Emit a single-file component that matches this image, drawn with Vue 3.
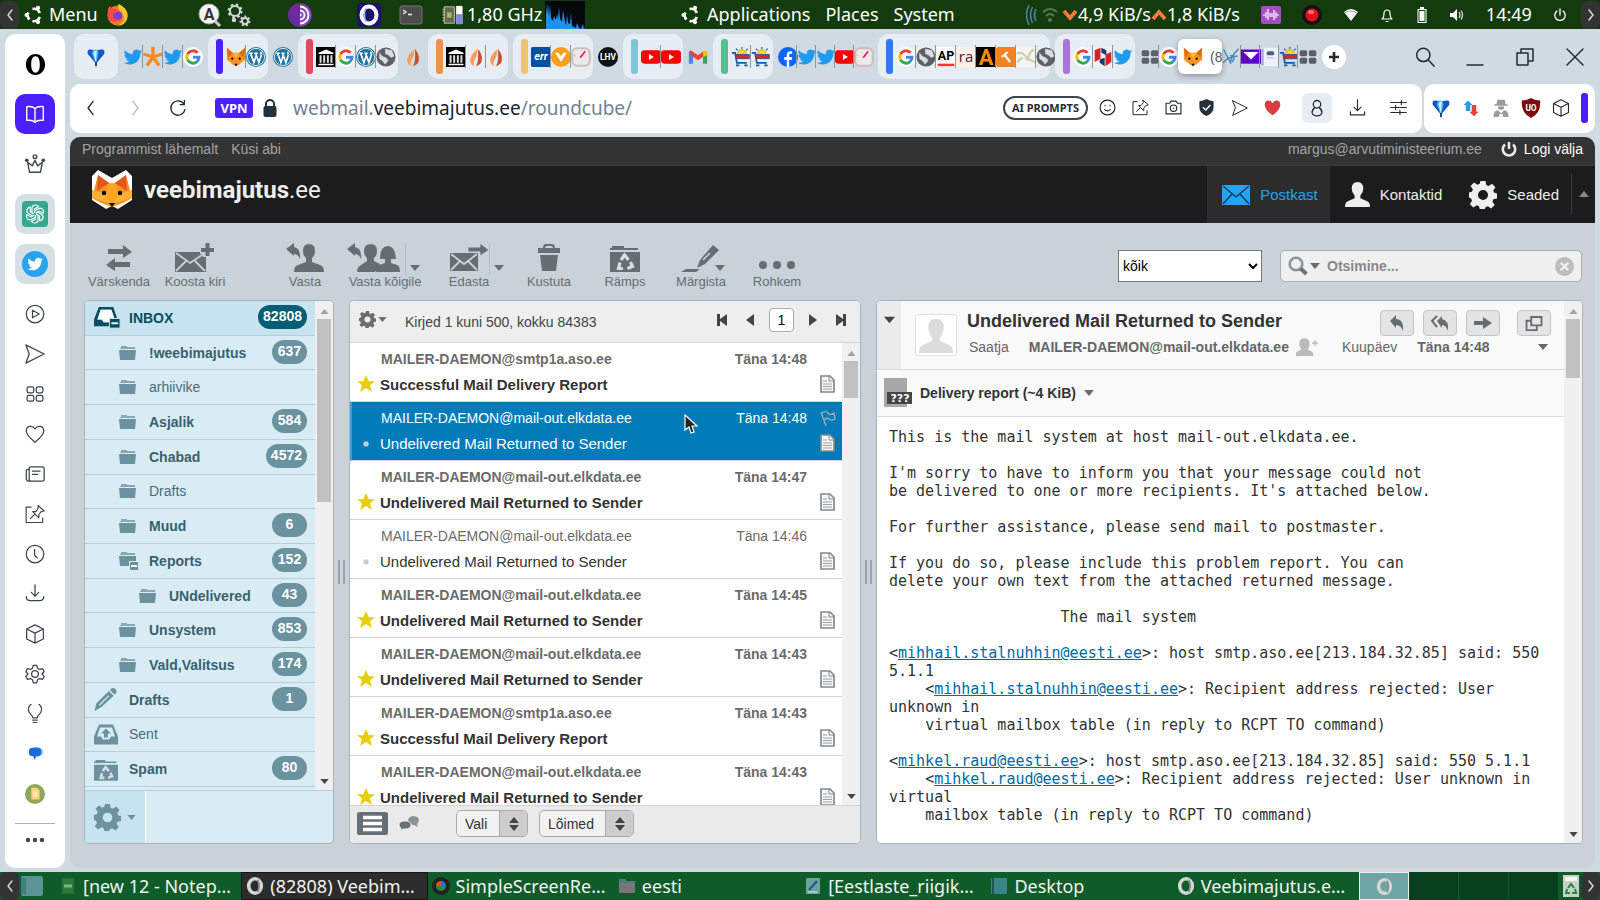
<script setup>
import { h, ref } from 'vue'

const line = (body, w = 1.5) => `<g fill="none" stroke="currentColor" stroke-width="${w}" stroke-linejoin="round" stroke-linecap="round">${body}</g>`

// name: [viewBox, markup]
const glyphs = {
  ubuntu: ['0 0 20 20', '<g fill="none" stroke="#fff" stroke-width="2.600"><path d="M4.300 7.500A6.300 6.300 0 0 0 5.500 14.500"/><path d="M8.500 16.100A6.300 6.300 0 0 0 15.800 12"/><path d="M15.800 8A6.300 6.300 0 0 0 8.500 3.900"/></g><g fill="#fff"><circle cx="2.600" cy="10" r="2.100"/><circle cx="14" cy="2.900" r="2.100"/><circle cx="14" cy="17.100" r="2.100"/></g>'],
  firefox: ['0 0 24 24', '<circle cx="12" cy="13" r="10.500" fill="#ff7a1c"/><path d="M13 1c5 2 10 7 9.500 13S17 24 12 23.500c7-1 9-8 4-14-2-2-4-4-3-8.500z" fill="#ffc52d"/><circle cx="12" cy="13.500" r="5" fill="#7a3fd0"/><path d="M2 8c0-2 1-4 2-5 1 2 2 2 4 3 2 0 5 1 5 3-3 0-4 2-6 3 0 4 4 6 7 5-3 5-12 3-12-4z" fill="#ff4a4a"/>'],
  searcha: ['0 0 24 24', '<path d="M16 17l6 6" stroke="#ccc" stroke-width="3"/><circle cx="11" cy="11" r="10" fill="#f4f4f4" stroke="#aaa"/><text x="11" y="17" font-size="16" font-weight="700" text-anchor="middle" fill="#333" font-family="Roboto">A</text>'],
  gears: ['0 0 24 24', '<g fill="none" stroke="#d6d6d6" stroke-width="2"><circle cx="8" cy="8" r="5"/><circle cx="8" cy="8" r="6.500" stroke-dasharray="2.500 2.600"/><circle cx="18" cy="18" r="3"/><circle cx="18" cy="18" r="4.500" stroke-dasharray="2 2"/><circle cx="7" cy="17" r="1.200"/></g>'],
  tor: ['0 0 24 24', '<circle cx="12" cy="12" r="12" fill="#6d2a9c"/><path d="M12 1a11 11 0 0 1 0 22z" fill="#8a4dba"/><g fill="none" stroke="#fff" stroke-width="1.800"><path d="M12 3.500a8.500 8.500 0 0 1 0 17M12 7.500a4.500 4.500 0 0 1 0 9"/></g><path d="M12 10.500a1.500 1.500 0 0 1 0 3z" fill="#fff"/>'],
  operagx: ['0 0 24 24', '<rect width="24" height="24" rx="4" fill="#1c1366"/><ellipse cx="12" cy="12" rx="7.500" ry="8.500" fill="none" stroke="#fff" stroke-width="4"/><path d="M9 5q-3 7 0 14" stroke="#9fb0ff" stroke-width="1.500" fill="none"/>'],
  terminal: ['0 0 24 20', '<rect x="1" y="1" width="22" height="18" rx="2" fill="#4c4c4c" stroke="#777"/><path d="M4 5l3 2-3 2M9 9.500h4" stroke="#eee" fill="none" stroke-width="1.300"/>'],
  cpu: ['0 0 24 22', '<path d="M1 5h14M1 8h14M1 11h14M1 14h14M1 17h14" stroke="#a9a98a" stroke-width="1.500"/><rect x="3" y="2" width="11" height="18" fill="#63694a" stroke="#c8c8a0"/><rect x="6" y="8" width="5" height="6" fill="#a5b878"/><rect x="16" y="1" width="7" height="20" fill="#fff"/><rect x="16" y="10" width="7" height="11" fill="#8488d8"/>'],
  graph: ['0 0 40 28', '<rect width="40" height="28" fill="#05080c"/><path d="M1 28V4l1 9 1-11 1 14 1-12 1 13 2 3 1-5 2 4 1-6 1 5 1-12 1 12 2 3 1-12 2 12 1 3 1-11 1 9 2 1 1-11 1 13 2 1 2 1 1-5 2 5 2 1 2-5 1 6 1-3v5z" fill="#1994f2"/>'],
  waves: ['0 0 12 24', '<path d="M10 6q-3 6 0 12M6.500 4q-4 8 0 16M3 2q-5 10 0 20" fill="none" stroke="#4c7fa8" stroke-width="1.600"/>'],
  dimwifi: ['0 0 16 16', '<g fill="none" stroke="#5f735c" stroke-width="2"><path d="M1 5q7-6 14 0M4 9q4-4 8 0"/></g><circle cx="8" cy="13" r="2" fill="#5f735c"/>'],
  down: ['0 0 16 14', '<path d="M2 3l6 7 6-7" fill="none" stroke="#ff7b3e" stroke-width="3.500"/>'],
  up: ['0 0 16 14', '<path d="M2 11l6-7 6 7" fill="none" stroke="#ff7b3e" stroke-width="3.500"/>'],
  audio: ['0 0 20 18', '<rect width="20" height="18" rx="2" fill="#a94cc4"/><path d="M3 8v2M5 6v6M7 3v11M9 7v4M11 7v4M13 4v10M15 6v6M17 8v2" stroke="#fff" stroke-width="1.200"/>'],
  record: ['0 0 20 20', '<circle cx="10" cy="10" r="10" fill="#1f0d0d"/><circle cx="10" cy="10" r="6.500" fill="#e01420"/><ellipse cx="9" cy="7" rx="3" ry="2" fill="#ff7070"/>'],
  wifi: ['0 0 16 14', '<path d="M1 4q7-6 14 0L8 13z" fill="#fff"/><path d="M2 5q6-4 12 0" stroke="#8aa58a" fill="none"/>'],
  bell: ['0 0 14 16', line('<path d="M2 12q2-1 2-6a3 3 0 0 1 6 0q0 5 2 6z"/><path d="M6 14.500h2"/>', 1.2)],
  battery: ['0 0 12 16', '<path d="M4 0h4v2h2.500v14h-9V2H4z" fill="#fff"/><path d="M3 3.500h6v11H3z" fill="none" stroke="#123c0b"/>'],
  sound: ['0 0 16 14', '<path d="M1 5h3l4-4v12L4 9H1z" fill="#fff"/><path d="M10 4q2 3 0 6M12 2.500q3 4.500 0 9" fill="none" stroke="#cfd8cf" stroke-width="1.300"/>'],
  power: ['0 0 14 14', line('<path d="M4 3a5.200 5.200 0 1 0 6 0M7 1v6"/>', 1.3)],
  chevL: ['0 0 8 12', line('<path d="M6 1L2 6l4 5"/>', 1.4)],
  chevR: ['0 0 8 12', line('<path d="M2 1l4 5-4 5"/>', 1.4)],

  opera: ['0 0 24 24', '<path fill-rule="evenodd" d="M12 1c5.500 0 10 4.500 10 11s-4.500 11-10 11S2 18.500 2 12 6.500 1 12 1zm0 2.500C9 3.500 7.500 7 7.500 12s1.500 8.500 4.500 8.500 4.500-3.500 4.500-8.500S15 3.500 12 3.500z" fill="currentColor"/>'],
  book: ['0 0 24 24', line('<path d="M12 6q-3-3-9-2v15q6-1 9 2 3-3 9-2V4q-6-1-9 2zM12 6v15"/>')],
  crown: ['0 0 24 24', line('<path d="M4 10l2 11h12l2-11-5 4-3-6-3 6z"/><circle cx="12" cy="4" r="2"/>') + '<circle cx="3" cy="8" r="2" fill="currentColor"/><circle cx="21" cy="8" r="2" fill="currentColor"/>'],
  gpt: ['0 0 26 26', '<rect width="26" height="26" rx="4" fill="#34a88c"/><g fill="none" stroke="#fff" stroke-width="1.200"><path d="M10 12V7.500q0-3.500 3.500-3.500 2 0 3 1.500l-4 2.500v4"/><path d="M10 12V7.500q0-3.500 3.500-3.500 2 0 3 1.500l-4 2.500v4" transform="rotate(60 13 13)"/><path d="M10 12V7.500q0-3.500 3.500-3.500 2 0 3 1.500l-4 2.500v4" transform="rotate(120 13 13)"/><path d="M10 12V7.500q0-3.500 3.500-3.500 2 0 3 1.500l-4 2.500v4" transform="rotate(180 13 13)"/><path d="M10 12V7.500q0-3.500 3.500-3.500 2 0 3 1.500l-4 2.500v4" transform="rotate(240 13 13)"/><path d="M10 12V7.500q0-3.500 3.500-3.500 2 0 3 1.500l-4 2.500v4" transform="rotate(300 13 13)"/></g>'],
  twcircle: ['0 0 48 48', '<circle cx="24" cy="24" r="24" fill="#2aa3ef"/><path transform="translate(10 10) scale(1.180)" d="M23.950 4.570a10 10 0 0 1-2.820.77 4.960 4.960 0 0 0 2.160-2.720 9.900 9.900 0 0 1-3.120 1.190 4.920 4.920 0 0 0-8.380 4.480A13.930 13.930 0 0 1 1.640 3.160a4.920 4.920 0 0 0 1.520 6.570 4.900 4.900 0 0 1-2.230-.61v.06a4.920 4.920 0 0 0 3.950 4.830 5 5 0 0 1-2.210.08 4.940 4.940 0 0 0 4.600 3.420A9.870 9.870 0 0 1 0 19.540a14 14 0 0 0 7.550 2.210c9.050 0 14-7.500 14-13.980 0-.21 0-.42-.02-.63a9.940 9.940 0 0 0 2.460-2.550z" fill="#fff"/>'],
  twitter: ['-1 -1 26 26', '<path d="M23.950 4.570a10 10 0 0 1-2.820.77 4.960 4.960 0 0 0 2.160-2.720 9.900 9.900 0 0 1-3.120 1.190 4.920 4.920 0 0 0-8.380 4.480A13.930 13.930 0 0 1 1.640 3.160a4.920 4.920 0 0 0 1.520 6.570 4.900 4.900 0 0 1-2.230-.61v.06a4.920 4.920 0 0 0 3.950 4.830 5 5 0 0 1-2.210.08 4.940 4.940 0 0 0 4.600 3.420A9.870 9.870 0 0 1 0 19.540a14 14 0 0 0 7.550 2.210c9.050 0 14-7.500 14-13.980 0-.21 0-.42-.02-.63a9.940 9.940 0 0 0 2.460-2.550z" fill="#1d9bf0"/>'],
  play: ['0 0 24 24', line('<circle cx="12" cy="12" r="10.500"/><path d="M9 7.500l8 4.500-8 4.500z"/>')],
  send: ['0 0 24 24', line('<path d="M1 1l22 11L1 23l4-11z"/>')],
  speed: ['0 0 24 24', line('<rect x="2.500" y="3.500" width="8" height="7" rx="2"/><rect x="13.500" y="3.500" width="8" height="7" rx="2"/><rect x="2.500" y="13.500" width="8" height="7" rx="2"/><rect x="13.500" y="13.500" width="8" height="7" rx="2"/>')],
  heart: ['0 0 24 24', line('<path d="M12 22C6 17 1.500 13 1.500 8.500 1.500 2 9 1 12 6c3-5 10.500-4 10.500 2.500C22.500 13 18 17 12 22z"/>')],
  news: ['0 0 24 24', line('<rect x="5" y="3.500" width="18" height="17" rx="2"/><path d="M5 6.500H3.500q-2 0-2 2v9q0 3 3 3H6M9 8.500h9M9 12.500h6"/>')],
  pin: ['0 0 26 24', line('<path d="M8 3H1.500v20H23v-6M7 18l5-5M17 1l8 7-4 1-3 4v4l-8-8h4l3-4z"/>')],
  clock: ['0 0 24 24', line('<circle cx="12" cy="12" r="10.500"/><path d="M11.500 6.500v7l3 3"/>')],
  download: ['0 0 24 24', line('<path d="M12 1v13M7.500 10l4.500 4.500 4.500-4.500M1.500 15q0 5 5 5h11q5 0 5-5"/>')],
  cube: ['0 0 24 24', line('<path d="M12 1l10 5v12l-10 5-10-5V6zM2 6l10 5 10-5M12 11v12"/>')],
  gearline: ['0 0 24 24', line('<circle cx="12" cy="12" r="4"/><path d="M10 1.500h4l1 3.500 2.500 1.500 3.500-1 2 3.500-2.500 3 2.500 3-2 3.500-3.500-1L15 19l-1 3.500h-4L9 19l-2.500-1.500-3.500 1L1 15l2.500-3L1 9l2-3.500 3.500 1L9 5z"/>')],
  bulb: ['0 0 24 26', line('<path d="M9 18q0-3-3-5a8.500 8.500 0 1 1 12 0q-3 2-3 5zM9 21h6M9.500 24h5"/>')],
  chat: ['0 0 16 16', '<ellipse cx="9" cy="6" rx="7" ry="5" fill="#7db0ff"/><path d="M2 5q0-3 3-3h6q3 0 3 3v1q0 4-3 4H9l-1 4-2-4H5q-3 0-3-3z" fill="#1a6ae0"/>'],
  file: ['0 0 22 22', '<circle cx="11" cy="11" r="11" fill="#8ea75a"/><path d="M7 4h6l3 3v10H7z" fill="#ffd47a"/><path d="M9 9h4M9 11h5M9 13h5" stroke="#fff"/>'],
  more: ['0 0 20 6', '<g fill="#3b464f"><circle cx="3" cy="3" r="2.200"/><circle cx="10" cy="3" r="2.200"/><circle cx="17" cy="3" r="2.200"/></g>'],

  balloon: ['0 0 24 24', '<path d="M12 20L2 8Q1 2 6 3q6 2 12 0 5-1 4 5z" fill="#1457c8"/><path d="M12 20L7 8q0-5 5-5 3 1 3 5z" fill="#3fb2ff"/><path d="M12 19q-2-7-3-11 1-4 4-4z" fill="#cfefff"/><path d="M11 18h2v5h-2z" fill="#0c2a5c"/>'],
  star6: ['0 0 20 20', '<g stroke="#f68b1f" stroke-width="3.400"><path d="M10 10V0M10 10L.5 7M10 10l9.500-3M10 10L4 18.500M10 10l6 8.500"/></g>'],
  google: ['0 0 24 24', '<circle cx="12" cy="12" r="12" fill="#fff"/><g fill="none" stroke-width="3.600"><path d="M17.500 7A7.400 7.400 0 0 0 5.500 8.500" stroke="#ea4335"/><path d="M5.500 8.500a7.400 7.400 0 0 0 0 7" stroke="#fbbc05"/><path d="M5.500 15.500A7.400 7.400 0 0 0 17 17.500" stroke="#34a853"/><path d="M12 12.200h7.200q0 3.500-2.400 5.300" stroke="#4285f4"/></g>'],
  fox: ['0 0 24 24', '<path d="M1 1l7 6h8l7-6v14l-7 6-4 2-4-2-7-6z" fill="#f7931e"/><path d="M1 1l7 6-5 6zM23 1l-7 6 5 6z" fill="#e2661a"/><path d="M8 7h8l-4 7z" fill="#ffb43c"/><circle cx="7.500" cy="14" r="1.300"/><circle cx="16.500" cy="14" r="1.300"/><path d="M10 20h4l-2 3z"/>'],
  wp: ['0 0 24 24', '<circle cx="12" cy="12" r="12" fill="#21759b"/><circle cx="12" cy="12" r="10.300" fill="none" stroke="#fff"/><path d="M4 7.500h4M10 7.500h4M5.500 7.500l4 11 2.800-8M11.500 7.500l4 11 3-9q0-2-1-3.500" fill="none" stroke="#fff" stroke-width="2"/>'],
  museum: ['0 0 24 24', '<rect width="24" height="24" fill="#000"/><path d="M3 7l9-4 9 4v1.500H3zM3 20h18v2H3z" fill="#fff"/><path d="M5.500 10v9M9.800 10v9M14.200 10v9M18.500 10v9" stroke="#ddd" stroke-width="2.400"/>'],
  globe: ['0 0 24 24', '<circle cx="12" cy="12" r="11.500" fill="#5f6163"/><path d="M4 6q3 6 7 6l4 4-4 5-3-4-4-3zM11 2l8 2 3 7-4 2-3-3-4-2z" fill="#d8dee3"/>'],
  flame: ['0 0 24 24', '<path d="M14 2q6 7 5 13 0 6-7 8 4-7 2-21z" fill="#c9502c"/><path d="M13 3q-8 7-8 13 0 5 5 7-2-5 1-9 3-4 2-11z" fill="#ff9c66"/>'],
  err: ['0 0 24 24', '<rect width="24" height="24" rx="2" fill="#0450a4"/><text x="12" y="16" text-anchor="middle" font-size="13" font-weight="700" font-style="italic" fill="#fff" font-family="Roboto">err</text>'],
  vcircle: ['0 0 24 24', '<circle cx="12" cy="12" r="12" fill="#f9a01b"/><path d="M5 7l7 11 7-11h-4l-3 4-3-4z" fill="#fff"/>'],
  dial: ['0 0 24 24', '<rect x="1.500" y="1.500" width="21" height="21" rx="6" fill="#eceae9" stroke="#cbbfbb" stroke-width="2.500"/><path d="M11 13l6-8" stroke="#ec1381" stroke-width="2"/><path d="M3 9l3 2" stroke="#bbb"/>'],
  lhv: ['0 0 24 24', '<circle cx="12" cy="12" r="12" fill="#111"/><text x="12" y="16" text-anchor="middle" font-size="10" font-weight="700" fill="#fff" font-family="Roboto">LHV</text>'],
  youtube: ['0 0 24 24', '<rect y="4" width="24" height="16" rx="4" fill="#f00"/><path d="M9.500 8.500l6 3.500-6 3.500z" fill="#fff"/>'],
  gmail: ['0 0 24 24', '<path d="M1 6v14h5V10z" fill="#4285f4"/><path d="M23 6v14h-5V10z" fill="#34a853"/><path d="M1 6q1-3 4-1l7 5 7-5v6l-7 5-7-5z" fill="#ea4335"/><path d="M18 6q4-4 5 0v4l-5 2z" fill="#fbbc05"/>'],
  cart: ['0 0 24 24', '<circle cx="13" cy="8" r="5" fill="#ffd52b" stroke="#e39b00"/><path d="M6 2l2 2M13 0v2M20 2l-2 2" stroke="#1f60a8" stroke-width="1.500"/><path d="M1 7h4l2 12h12M6 22h4M16 22h4" fill="none" stroke="#1b579c" stroke-width="2"/><path d="M5 9h17v5H6z" fill="#e02125" stroke="#1b579c"/>'],
  facebook: ['0 0 24 24', '<circle cx="12" cy="12" r="12" fill="#0866ff"/><path d="M10.500 24v-8.500H7.500V12h3V9.500Q10.500 5 15 5h2v3h-2q-1.500 0-1.500 2v2H17l-.6 3.500h-3V24z" fill="#fff"/>'],
  ap: ['0 0 24 24', '<rect width="24" height="24" fill="#fff"/><text x="12" y="16" text-anchor="middle" font-size="15" font-weight="700" font-family="Roboto">AP</text><path d="M2 21.500h20" stroke="#ff322e" stroke-width="3"/>'],
  ra: ['0 0 24 24', '<rect width="24" height="24" fill="#fdeee6"/><text x="12" y="18" text-anchor="middle" font-size="18" fill="#4a1f2c" font-family="Open Sans">ra</text>'],
  biga: ['0 0 24 24', '<rect width="24" height="24" fill="#000"/><text x="12" y="21" text-anchor="middle" font-size="26" font-weight="700" fill="#ff8a00" font-family="Roboto">A</text>'],
  hammer: ['0 0 24 24', '<rect width="24" height="24" rx="3" fill="#f58220"/><path d="M7 12l7-6M10 9l7 9" stroke="#fff" stroke-width="2.600"/>'],
  plant: ['0 0 24 24', '<rect width="24" height="24" fill="#f4f5f2"/><path d="M1 8q8-4 13 8M22 3q-7 3-8 13M8 13q-5 2-6 6M14 15q5 0 9 4" fill="none" stroke="#cfccae" stroke-width="2.500"/>'],
  blocks: ['0 0 24 24', '<rect width="24" height="24" fill="#f3f3f3"/><path d="M2 4l7-3v13l-7 4z" fill="#d81f2a"/><path d="M10 1l6 3v6l-6-3z" fill="#1e3a6e"/><path d="M8 15l6-2v10l-6-4z" fill="#1e3a6e"/><path d="M15 9l7-3v12l-7 5z" fill="#d81f2a"/>'],
  tiles: ['0 0 24 24', '<g fill="#5b6066"><rect x="2" y="4" width="9" height="7" rx="2"/><rect x="13" y="4" width="9" height="7" rx="2"/><rect x="2" y="13" width="9" height="7" rx="2"/><rect x="13" y="13" width="9" height="7" rx="2"/></g>'],
  script: ['0 0 24 24', '<path d="M2 3q6 12 9 17M20 2q-9 8-10 18M1 19q8-9 18-8M10 10q8 2 2 8" fill="none" stroke="#3b86b8" stroke-width="1.600"/>'],
  ymail: ['0 0 24 24', '<rect y="3" width="24" height="17" fill="#5f01d1"/><path d="M3 6h18l-9 9z" fill="#fff"/>'],
  page: ['0 0 24 24', '<path d="M2 1h20v22H2z" fill="#eef1f5"/><path d="M3 2v20" stroke="#9fb2cf" stroke-width="3"/><rect x="8" y="5" width="9" height="5" rx="2" fill="#41608f"/><path d="M8 13h8" stroke="#aab"/>'],

  back: ['0 0 24 24', line('<path d="M14.500 4l-6 8 6 8"/>', 1.6)],
  forward: ['0 0 24 24', line('<path d="M9.500 4l6 8-6 8"/>', 1.6)],
  reload: ['0 0 24 24', line('<path d="M20 7a9.500 9.500 0 1 0 1.300 7M20.500 2v5.500H15"/>', 1.7)],
  lock: ['0 0 16 20', '<path d="M4 9V6a4 4 0 0 1 8 0v3" fill="none" stroke="#24303a" stroke-width="2"/><rect x="1.500" y="8" width="13" height="11" rx="2" fill="#24303a"/>'],
  smile: ['0 0 24 24', line('<circle cx="12" cy="12" r="10.500"/><path d="M8 15q4 3.500 8 0M8.500 9v.5M15.500 9v.5"/>', 1.7)],
  camera: ['0 0 24 24', line('<path d="M1.500 6h5l2-3h7l2 3h5v15h-21z"/><circle cx="12" cy="13" r="4.500"/><path d="M11.500 13h1"/>', 1.6)],
  shield: ['0 0 24 24', '<path d="M12 0q5 3 10 3v9q0 8-10 12Q2 20 2 12V3q5 0 10-3z" fill="#24303a"/><path d="M7 11.500l4 4 6.500-7" fill="none" stroke="#fff" stroke-width="2"/>'],
  heartfull: ['0 0 24 24', '<path d="M12 23Q1 15 1 8 1 2 6.500 2 10 2 12 6q2-4 5.500-4Q23 2 23 8q0 7-11 15z" fill="#d93d40"/>'],
  person: ['0 0 24 24', line('<circle cx="12" cy="7" r="5"/><path d="M9 11.500q-4 3-3.500 7 1 4 6.500 4t6.500-4q.5-4-3.500-7"/>', 1.7)],
  tray: ['0 0 24 24', line('<path d="M12 1v15M7 11.500l5 5 5-5M2 18v4.500h20V18"/>', 1.6)],
  sliders: ['0 0 24 24', line('<path d="M1 5h22M1 12h22M1 19h22M16 2v6M8 9v6M14 16v6"/>', 1.6)],
  arrows: ['0 0 24 24', '<path d="M8 2l6 6h-3v8H5V8H2z" fill="#2f9be8"/><path d="M16 23l6-6h-3V8h-6v9h-3z" fill="#e8413a"/>'],
  agent: ['0 0 24 24', '<g fill="#9b9b9b"><path d="M7 1h10l1 6h3v2H3V7h3zM8 10h8v3q-4 3-8 0zM2 24q0-9 6-9l4 4 4-4q6 0 6 9h-7l-1-4h-4l-1 4z"/></g>'],
  ublock: ['0 0 24 24', '<path d="M12 0q5 3 11 3 1 15-11 21Q0 18 1 3q6 0 11-3z" fill="#800610"/><text x="12" y="15" text-anchor="middle" font-size="10" font-weight="700" fill="#fff" font-family="Roboto">UO</text>'],
  search: ['0 0 24 24', line('<circle cx="10" cy="9.500" r="8"/><path d="M16 15.500l7 7.500"/>', 1.8)],
  minimize: ['0 0 20 20', line('<path d="M2 18h16"/>')],
  restore: ['0 0 20 20', line('<path d="M6 6V2h12v12h-5M2 6h11v12H2z"/>')],
  close: ['0 0 20 20', line('<path d="M2 2l16 16M18 2L2 18"/>')],
  plus: ['0 0 24 24', '<circle cx="12" cy="12" r="12" fill="#fff"/><path d="M12 7v10M7 12h10" stroke="#222c35" stroke-width="2.600"/>'],

  foxlogo: ['0 0 40 40', '<path d="M0 6L6 0l14 8L34 0l6 6v24L26 39l-6-3-6 3L0 30z" fill="#fff"/><path d="M6 5l11 8h6l11-8 6 23-9 5-11 4-11-4-9-5z" fill="#f7931e"/><path d="M6 5l11 8-12 8zM34 5l-11 8 12 8z" fill="#e4561b"/><path d="M17 13h6l4 11-7 8-7-8z" fill="#ffa51f"/><path d="M0 20l12 3 8 10-8-1-12-5zM40 20l-12 3-8 10 8-1 12-5z" fill="#fbb034"/><circle cx="12" cy="23" r="2.200"/><circle cx="28" cy="23" r="2.200"/><path d="M17 33h6l-3 4z"/>'],
  offbold: ['0 0 16 16', '<path d="M4 3.500a6.200 6.200 0 1 0 8 0" fill="none" stroke="#e8e8e8" stroke-width="2.600"/><path d="M8 1v7" stroke="#e8e8e8" stroke-width="2.600"/>'],
  envelope: ['0 0 28 20', '<rect width="28" height="20" fill="currentColor"/><path d="M1 1l13 11L27 1M1 19l9-10M27 19l-9-10" fill="none" stroke="#16324a" stroke-width="1.300"/>'],
  contact: ['0 0 26 26', '<path d="M13 0q6 0 6 7 0 4-3 7v3l7 3q3 1 3 6H0q0-5 3-6l7-3v-3q-3-3-3-7 0-7 6-7z" fill="currentColor"/>'],
  gear: ['0 0 28 28', '<path fill-rule="evenodd" d="M11.500 0h5l.8 4 2.300 1 3.400-2.300 3.500 3.500-2.300 3.400 1 2.200 2.800.7v5l-3.600.8-1 2.300 2.300 3.400-3.500 3.500-3.400-2.300-2.200 1-.8 1.800h-5l-.8-2.800-2.300-1-3.400 2.300-3.500-3.500 2.300-3.400-1-2.200L0 16.500v-5l2.900-.8 1-2.300L1.600 5 5 1.500l3.400 2.300 2.300-1zM14 9a5 5 0 1 0 0 10 5 5 0 0 0 0-10z" fill="currentColor"/>'],
  caret: ['0 0 10 6', '<path d="M0 0h10L5 6z" fill="currentColor"/>'],
  caretup: ['0 0 10 6', '<path d="M0 6h10L5 0z" fill="currentColor"/>'],

  refresh: ['0 0 30 30', '<path d="M4 6h15V2l9 7-9 6v-4H4zM26 19H11v-4l-9 7 9 6v-4h15z" fill="currentColor"/>'],
  compose: ['0 0 40 30', '<path d="M0 9h31v20H0z" fill="currentColor"/><path d="M1 10l14 10 15-10M1 28l10-10M30 28L20 18" fill="none" stroke="#c9d1d9" stroke-width="1.800"/><path d="M25 7h14M32 0v14" stroke="#c9d1d9" stroke-width="8"/><path d="M26 7h13M32.500 0v13" stroke="currentColor" stroke-width="4"/>'],
  reply: ['0 0 38 30', '<path d="M23 1q6 0 6 7 0 5-3 7v4l8 3q4 1 4 7H8q0-6 4-7l8-3v-4q-3-2-3-7 0-7 6-7zM0 6l8-6v4q7 1 6 12-2-5-6-5v2z" fill="currentColor"/>'],
  replyall: ['0 0 54 30', '<path d="M24 1q6 0 6 7 0 5-3 7v3l6 3-5 8H10q0-5 4-7l6-4v-3q-3-2-3-7 0-7 7-7zM0 6l8-6v4q7 1 6 12-2-5-6-5v2zM41 3q7 0 8 13h-5v4l6 2q3 1 3 7H29q0-6 3-7l6-2v-4h-5q0-13 8-13z" fill="currentColor"/>'],
  mailforward: ['0 0 38 30', '<path d="M0 10h28v18H0z" fill="currentColor"/><path d="M1 11l13 10 13-10M1 27l9-9M27 27l-9-9" fill="none" stroke="#c9d1d9" stroke-width="1.800"/><path d="M18 4h12V0l9 7-9 6V9H18z" fill="currentColor" stroke="#c9d1d9"/>'],
  trash: ['0 0 24 30', '<path d="M1 5h5q0-4 3-4h6q3 0 3 4h5v5H1zM3 12h18l-2 16H5z" fill="currentColor"/><path d="M8 5q0-2 2-2h4q2 0 2 2z" fill="#c9d1d9"/>'],
  junk: ['0 0 30 28', '<path d="M0 6V4h2V2h12v2h14v2zM0 8h30v20H0z" fill="currentColor"/><g fill="none" stroke="#d7dde2" stroke-width="3.200"><path d="M11 16l3.500-5 4 5M20.500 18l2 4.500-5 2M13 24.500H8.500l1.500-6"/></g>'],
  marker: ['0 0 40 30', '<path d="M0 29l5-3h14l-4 3zM16 25l3-8L32 2l6 5-14 14zM34 0l5 4" fill="currentColor"/><path d="M22 17l7-7" stroke="#c9d1d9" stroke-width="1.500"/>'],
  dots: ['0 0 36 30', '<g fill="currentColor"><circle cx="4" cy="22" r="4"/><circle cx="18" cy="22" r="4"/><circle cx="32" cy="22" r="4"/></g>'],
  find: ['0 0 20 20', '<circle cx="8" cy="8" r="6.300" fill="none" stroke="#8a9499" stroke-width="2.600"/><path d="M12.500 12.500l6 5.500" stroke="#6c7579" stroke-width="4"/>'],
  clear: ['0 0 20 20', '<circle cx="10" cy="10" r="10" fill="#bdbdbd"/><path d="M6 6l8 8M14 6l-8 8" stroke="#f4f4f4" stroke-width="2.200"/>'],

  inbox: ['0 0 28 22', '<path fill-rule="evenodd" d="M5 0h15l4 12v8H0v-7zM7 3L3.500 13H8l2 3h6l2-3h3.500L18 3z" fill="currentColor"/><path d="M7 3h11l3.500 10H18l-2 3h-6l-2-3H3.500z" fill="#fff"/><rect x="16" y="12" width="11" height="10" fill="#064d5f" stroke="#c7e3ef"/><path d="M18 17h7" stroke="#dff" stroke-width="2"/>'],
  folder: ['0 0 17 16', '<path d="M1 3h1V1h6v1h8v2H1z" fill="currentColor" opacity=".75"/><path d="M0 5h17l-1 10H1z" fill="currentColor"/>'],
  foldersub: ['0 0 20 20', '<path d="M1 3h1V1h6v1h8v2H1z" fill="currentColor" opacity=".75"/><path d="M0 5h17v5h-7v5H1z" fill="currentColor"/><rect x="11" y="11" width="8" height="8" fill="currentColor"/><path d="M12 15h6" stroke="#fff" stroke-width="2"/>'],
  pencil: ['0 0 24 24', '<path d="M0 24l2-8L15 3l5 5L7 20zM17 1q2-2 5 0 2 3 0 5l-1 1-5-5z" fill="currentColor"/><path d="M5 18l10-10" stroke="#d9ecf4" stroke-width="1.300"/>'],
  sent: ['0 0 24 22', '<path d="M5 1h14l5 12v8H0v-8z" fill="currentColor"/><path d="M6 4h12l3 9h-4l-2 3H9l-2-3H3z" fill="#d9ecf4"/><path d="M12 5l5 5h-3v4h-4v-4H7z" fill="currentColor"/>'],
  first: ['0 0 12 12', '<path d="M1 0h3v5l7-5v12L4 7v5H1z" fill="currentColor"/>'],
  prev: ['0 0 12 12', '<path d="M10 0v12L2 6z" fill="currentColor"/>'],
  next: ['0 0 12 12', '<path d="M2 0v12l8-6z" fill="currentColor"/>'],
  last: ['0 0 12 12', '<path d="M11 0H8v5L1 0v12l7-5v5h3z" fill="currentColor"/>'],
  star: ['0 0 20 20', '<path d="M10 0l3 7h7l-5.500 4.500L16.500 19 10 14.500 3.500 19l2-7.500L0 7h7z" fill="#e6cf0a"/>'],
  bullet: ['0 0 20 20', '<circle cx="10" cy="11" r="3" fill="#c9cdcf"/>'],
  attach: ['0 0 15 18', '<path d="M1 1h9l4 4v12H1z" fill="#f7f7f7" stroke="#848a8d" stroke-width="1.700"/><path d="M9 1v5h5" fill="none" stroke="#848a8d"/><path d="M3 6h4M3 9h9M3 11.500h9M3 14h9" stroke="#9aa0a3"/>'],
  flag: ['0 0 16 17', '<path d="M1 2l5 14M2 3q4-3 6 0t6 0l1 6q-4 2-6 0t-5 1" fill="none" stroke="#8fa5b3" stroke-width="1.600"/>'],
  cursor: ['0 0 14 20', '<path d="M1 1v15l4-3 2 6 3-1-2-6h5z" fill="#222" stroke="#fff" stroke-width="1.200"/>'],
  list: ['0 0 31 23', '<rect width="31" height="23" rx="2" fill="#666f73"/><path d="M6 5.500h19M6 11.500h19M6 17.500h19" stroke="#fff" stroke-width="3.500"/>'],
  bubbles: ['0 0 20 16', '<path d="M9 4q1-4 6-4 5 1 5 4 0 2-2 4l1 3-4-2q-4 0-6-5z" fill="#8b9296"/><path d="M6 5q6 0 6 4t-6 4l-2 0-3 2 1-3q-2-1-2-3 0-4 6-4z" fill="#666f73" stroke="#eaeaea"/>'],
  updown: ['0 0 10 14', '<path d="M0 6h10L5 0zM0 8h10l-5 6z" fill="#444"/>'],

  avatar: ['0 0 42 42', '<path d="M21 4q9 0 8 11-1 6-4 9v3l9 4q5 2 5 9H3q0-7 5-9l9-4v-3q-3-3-4-9Q12 4 21 4z" fill="#dcdcdc"/>'],
  addcontact: ['0 0 22 18', '<path d="M8 1q5 0 5 5 0 3-2 5v1l4 2q2 1 2 4H0q0-3 2-4l4-2v-1Q4 9 4 6q0-5 4-5zM16 5h6M19 2v6" fill="#bbb" stroke="#bbb" stroke-width="1.500"/>'],
  unknown: ['0 0 28 30', '<rect width="23" height="29" fill="#a8a8a8"/><rect x="3" y="14" width="25" height="12" fill="#454545"/><text x="16" y="24" text-anchor="middle" font-size="11" font-weight="700" fill="#fff" font-family="DejaVu Sans">???</text>'],
  areply: ['0 0 16 16', '<path d="M1 6l6-6v4q8 0 7 12-2-6-7-6v3z" fill="currentColor"/>'],
  areplyall: ['0 0 18 16', '<path d="M6 6l5-5v3q7 1 6 12-2-6-6-6v3z" fill="currentColor"/><path d="M6 1L1 6l5 6" fill="none" stroke="currentColor" stroke-width="2"/>'],
  aforward: ['0 0 18 16', '<path d="M0 6h9V2l9 6-9 6v-4H0z" fill="currentColor"/>'],
  popup: ['0 0 18 16', '<path d="M6 1h11v9H6zM5 5H1v10h11v-4" fill="none" stroke="currentColor" stroke-width="2"/>'],

  desk: ['0 0 22 20', '<rect width="22" height="20" rx="2" fill="#5a9496"/><path d="M0 2h5v16H0z" fill="#477c7e"/>'],
  notepad: ['0 0 16 18', '<rect x="2" y="1" width="12" height="16" fill="#2f7a3c" stroke="#225c2c"/><path d="M4 9h8" stroke="#69c46d" stroke-width="3"/>'],
  operagrey: ['0 0 20 20', '<ellipse cx="10" cy="10" rx="7" ry="8" fill="none" stroke="#d6d6d6" stroke-width="4"/><path d="M13 3q3 7 0 14" fill="none" stroke="#8c8c8c" stroke-width="2"/>'],
  ssr: ['0 0 18 18', '<circle cx="9" cy="9" r="9" fill="#222"/><circle cx="9" cy="9" r="5" fill="#258c4b"/><path d="M9 4a5 5 0 0 1 5 5H9z" fill="#2b6fd8"/><path d="M4 9a5 5 0 0 1 5-5v5z" fill="#d8502b"/>'],
  greyfolder: ['0 0 18 16', '<path d="M1 1h6l2 2h8v12H1z" fill="#4b7f76"/><rect x="1" y="5" width="16" height="10" rx="1" fill="#777"/>'],
  editor: ['0 0 16 18', '<rect x="1" y="1" width="14" height="16" rx="1" fill="#6ba59a"/><path d="M4 13l8-9" stroke="#245a9c" stroke-width="2.500"/><path d="M3 15h9" stroke="#def"/>'],
  deskfolder: ['-1 -1 18 18', '<rect width="16" height="16" rx="1" fill="#398486"/><path d="M2 0v16" stroke="#205457" stroke-width="2"/>'],
  bin: ['0 0 20 24', '<path d="M2 1h16v22H2z" fill="#c9d0c9"/><path d="M4 3h12v4H4z" fill="#f5f5f5"/><g fill="none" stroke="#1f8b34" stroke-width="2"><path d="M7 14l3-4 3 4M14 15l1 4h-4M9 19H5l1-4"/></g>']
}

const Icon = ({ name, w, s }) => {
  const [box, body] = glyphs[name]
  return h('svg', { viewBox: box, width: w || s || 20, height: s || 20, 'aria-hidden': 'true', innerHTML: body })
}
Icon.props = ['name', 'w', 's']

const sideTop = [
  { name: 'opera', size: 23 },
  { name: 'book', size: 22 },
  { name: 'crown', size: 22 },
  { name: 'gpt', size: 26 },
  { name: 'twcircle', size: 26 }
]
const sideItems = ['play', 'send', 'speed', 'heart', 'news', 'pin', 'clock', 'download', 'cube', 'gearline', 'bulb', 'chat', 'file']

const tabGroups = [
  { kind: 'single', tabs: ['balloon'] },
  { tabs: ['twitter', 'star6', 'twitter', 'google'] },
  { color: '#4b1fff', tabs: ['fox', 'wp'] },
  { tabs: ['wp'] },
  { color: '#e5475d', tabs: ['museum', 'google', 'wp', 'globe'] },
  { tabs: ['flame'] },
  { color: '#f1904c', tabs: ['museum', 'flame', 'flame'] },
  { color: '#eec472', tabs: ['err', 'vcircle', 'dial'] },
  { tabs: ['lhv'] },
  { color: '#7dc6d8', tabs: ['youtube', 'youtube'] },
  { tabs: ['gmail'] },
  { color: '#56bf91', tabs: ['cart', 'cart'] },
  { kind: 'tight', tabs: ['facebook', 'twitter', 'twitter', 'youtube', 'dial'] },
  { kind: 'long', color: '#2f78f8', tabs: ['google', 'globe', 'ap', 'ra', 'biga', 'hammer', 'plant', 'globe'] },
  { color: '#a974de', tabs: ['google', 'blocks', 'twitter'] }
]

const folders = [
  { name: 'INBOX', icon: 'inbox', level: 0, count: 82808 },
  { name: '!weebimajutus', icon: 'folder', level: 1, count: 637 },
  { name: 'arhiivike', icon: 'folder', level: 1 },
  { name: 'Asjalik', icon: 'folder', level: 1, count: 584 },
  { name: 'Chabad', icon: 'folder', level: 1, count: 4572 },
  { name: 'Drafts', icon: 'folder', level: 1 },
  { name: 'Muud', icon: 'folder', level: 1, count: 6 },
  { name: 'Reports', icon: 'foldersub', level: 1, count: 152 },
  { name: 'UNdelivered', icon: 'folder', level: 2, count: 43 },
  { name: 'Unsystem', icon: 'folder', level: 1, count: 853 },
  { name: 'Vald,Valitsus', icon: 'folder', level: 1, count: 174 },
  { name: 'Drafts', icon: 'pencil', level: 0, count: 1 },
  { name: 'Sent', icon: 'sent', level: 0 },
  { name: 'Spam', icon: 'junk', level: 0, count: 80 }
]

const smtp = 'MAILER-DAEMON@smtp1a.aso.ee'
const out = 'MAILER-DAEMON@mail-out.elkdata.ee'
const ok = 'Successful Mail Delivery Report'
const bad = 'Undelivered Mail Returned to Sender'
const messages = [
  { from: smtp, subject: ok, date: 'Täna 14:48', unread: true },
  { from: out, subject: bad, date: 'Täna 14:48' },
  { from: out, subject: bad, date: 'Täna 14:47', unread: true },
  { from: out, subject: bad, date: 'Täna 14:46' },
  { from: out, subject: bad, date: 'Täna 14:45', unread: true },
  { from: out, subject: bad, date: 'Täna 14:43', unread: true },
  { from: smtp, subject: ok, date: 'Täna 14:43', unread: true },
  { from: out, subject: bad, date: 'Täna 14:43', unread: true }
]
const selected = ref(1)

const tasks = [
  { icon: 'notepad', text: '[new 12 - Notep…' },
  { icon: 'operagrey', text: '(82808) Veebim…', active: true },
  { icon: 'ssr', text: 'SimpleScreenRe…' },
  { icon: 'greyfolder', text: 'eesti' },
  { icon: 'editor', text: '[Eestlaste_riigik…' },
  { icon: 'deskfolder', text: 'Desktop' },
  { icon: 'operagrey', text: 'Veebimajutus.e…' }
]
</script>

<template>
  <div class="desktop">
    <header class="panel-top">
      <div class="pt-group">
        <button class="handle" aria-label="Hide panel"><Icon name="chevL" :s="12" :w="8" /></button>
        <Icon name="ubuntu" :s="20" /><span class="menu">Menu</span><Icon name="firefox" :s="23" />
      </div>
      <div class="pt-group"><Icon name="searcha" :s="24" /><Icon name="gears" :s="24" /></div>
      <div class="pt-group"><Icon name="tor" :s="24" /></div>
      <div class="pt-group"><Icon name="operagx" :s="24" /></div>
      <div class="pt-group"><Icon name="terminal" :s="20" :w="24" /></div>
      <div class="pt-group pt-cpu"><Icon name="cpu" :s="20" :w="23" /><span>1,80 GHz</span><Icon name="graph" :s="28" :w="40" /></div>
      <nav class="pt-group pt-menus"><Icon name="ubuntu" :s="20" /><a href="#">Applications</a><a href="#">Places</a><a href="#">System</a></nav>
      <div class="pt-group pt-net">
        <Icon name="waves" :s="24" :w="12" /><Icon name="dimwifi" :s="16" /><Icon name="down" :s="14" :w="16" />
        <span>4,9 KiB/s</span><Icon name="up" :s="14" :w="16" /><span>1,8 KiB/s</span>
      </div>
      <div class="pt-group pt-tray">
        <Icon name="audio" :s="18" :w="20" /><Icon name="record" :s="20" /><Icon name="wifi" :s="14" :w="16" /><Icon name="bell" :s="16" :w="14" />
        <Icon name="battery" :s="16" :w="12" /><Icon name="sound" :s="14" :w="16" /><span>14:49</span>
        <div class="pt-end">
          <Icon name="power" :s="14" />
          <button class="handle" aria-label="Hide panel"><Icon name="chevR" :s="12" :w="8" /></button>
        </div>
      </div>
    </header>

    <div class="browser">
      <aside class="sidebar">
        <button v-for="b in sideTop" :key="b.name" class="side-btn tall" :class="b.name" :aria-label="b.name"><Icon :name="b.name" :s="b.size" /></button>
        <div class="side-list">
          <button v-for="name in sideItems" :key="name" class="side-btn" :aria-label="name"><Icon :name="name" :s="name === 'chat' ? 16 : 20" /></button>
        </div>
        <hr />
        <button class="side-more" aria-label="More"><Icon name="more" :s="6" :w="20" /></button>
      </aside>

      <div class="window">
        <div class="tabstrip">
          <div v-for="(g, i) in tabGroups" :key="i" class="tabs" :class="[g.kind, { island: g.color }]">
            <span v-if="g.color" class="island-bar" :style="{ background: g.color }"></span>
            <span v-for="(t, j) in g.tabs" :key="j" class="tab"><Icon :name="t" /></span>
          </div>
          <div class="tabs tight">
            <span class="tab"><Icon name="tiles" /></span><span class="tab"><Icon name="google" /></span>
            <span class="tab-active"><Icon name="fox" /><span class="tab-title">(8</span></span>
            <span class="tab"><Icon name="script" /></span><span class="tab"><Icon name="ymail" /></span><span class="tab"><Icon name="page" /></span><span class="tab"><Icon name="cart" /></span><span class="tab"><Icon name="tiles" /></span>
          </div>
          <button class="newtab" aria-label="New tab"><Icon name="plus" :s="24" /></button>
          <div class="winctl">
            <button aria-label="Search tabs"><Icon name="search" /></button>
            <button aria-label="Minimize"><Icon name="minimize" /></button>
            <button aria-label="Restore"><Icon name="restore" /></button>
            <button aria-label="Close"><Icon name="close" /></button>
          </div>
        </div>

        <div class="addressbar">
          <div class="address">
            <div class="navbtns">
              <button aria-label="Back"><Icon name="back" /></button>
              <button class="dim" aria-label="Forward"><Icon name="forward" /></button>
              <button aria-label="Reload"><Icon name="reload" :s="18" /></button>
            </div>
            <button class="vpn">VPN</button>
            <Icon name="lock" :w="16" />
            <div class="url" role="textbox" aria-label="Address">webmail.<b>veebimajutus.ee</b>/roundcube/</div>
            <button class="prompts">AI PROMPTS</button>
            <div class="actions">
              <button aria-label="Emoji"><Icon name="smile" :s="17" /></button>
              <button aria-label="Pinboard"><Icon name="pin" :s="17" /></button>
              <button aria-label="Snapshot"><Icon name="camera" :s="17" /></button>
              <button aria-label="Blocker"><Icon name="shield" :s="17" /></button>
              <button aria-label="Flow"><Icon name="send" :s="16" /></button>
              <button aria-label="Bookmark"><Icon name="heartfull" :s="17" /></button>
            </div>
            <button class="profile" aria-label="Profile"><Icon name="person" :s="18" /></button>
            <button class="wide" aria-label="Downloads"><Icon name="tray" :s="17" /></button>
            <button class="wide" aria-label="Setup"><Icon name="sliders" :s="17" /></button>
          </div>
          <div class="extensions">
            <button aria-label="Balloon"><Icon name="balloon" :s="20" /></button>
            <button aria-label="Traffic"><Icon name="arrows" :s="18" /></button>
            <button aria-label="Agent"><Icon name="agent" :s="18" /></button>
            <button aria-label="uBlock"><Icon name="ublock" :s="20" /></button>
            <button aria-label="Extensions"><Icon name="cube" :s="18" /></button>
            <span class="purple"></span>
          </div>
        </div>

        <div class="page">
          <div class="topline">
            <a href="#">Programmist lähemalt</a><a href="#">Küsi abi</a>
            <span class="user">margus@arvutiministeerium.ee</span>
            <a href="#" class="logout"><Icon name="offbold" :s="16" />Logi välja</a>
          </div>
          <div class="masthead">
            <a href="#" class="logo"><Icon name="foxlogo" :s="40" /><span><b>veebimajutus</b>.ee</span></a>
            <nav class="taskbar-nav">
              <a href="#" class="current"><Icon name="envelope" :s="20" :w="28" />Postkast</a>
              <a href="#"><Icon name="contact" :s="25" />Kontaktid</a>
              <a href="#"><Icon name="gear" :s="28" />Seaded</a>
            </nav>
            <button class="collapse" aria-label="Collapse"><Icon name="caretup" :s="6" :w="10" /></button>
          </div>

          <div class="toolbar">
            <button class="tool"><Icon name="refresh" :s="30" />Värskenda</button>
            <button class="tool"><Icon name="compose" :s="30" :w="40" />Koosta kiri</button>
            <button class="tool start"><Icon name="reply" :s="30" :w="38" />Vasta</button>
            <div class="split">
              <button class="tool left"><Icon name="replyall" :s="30" :w="54" />Vasta kõigile</button>
              <button class="drop" aria-label="Vasta valikud"><Icon name="caret" :s="6" :w="10" /></button>
            </div>
            <div class="split">
              <button class="tool"><Icon name="mailforward" :s="30" :w="38" />Edasta</button>
              <button class="drop" aria-label="Edasta valikud"><Icon name="caret" :s="6" :w="10" /></button>
            </div>
            <button class="tool"><Icon name="trash" :s="30" :w="24" />Kustuta</button>
            <button class="tool"><Icon name="junk" :s="30" :w="30" />Rämps</button>
            <div class="split plain">
              <button class="tool"><Icon name="marker" :s="30" :w="40" />Märgista</button>
              <button class="drop" aria-label="Märgista valikud"><Icon name="caret" :s="6" :w="10" /></button>
            </div>
            <button class="tool"><Icon name="dots" :s="30" :w="36" />Rohkem</button>
            <select class="filter" aria-label="Filter"><option>kõik</option></select>
            <div class="searchbox">
              <Icon name="find" :s="20" /><Icon name="caret" :s="6" :w="10" />
              <input type="text" placeholder="Otsimine..." aria-label="Otsimine" />
              <button aria-label="Tühjenda"><Icon name="clear" :s="19" /></button>
            </div>
          </div>

          <main class="columns">
            <section class="box folders">
              <div class="scrollarea">
                <ul>
                  <li v-for="(f, i) in folders" :key="i" :class="['l' + f.level, { unread: f.count, current: i === 0 }]">
                    <a href="#">
                      <span class="ficon"><Icon :name="f.icon" :s="f.level ? (f.icon === 'foldersub' ? 20 : 16) : 23" :w="f.icon === 'inbox' ? 27 : f.icon === 'foldersub' ? 20 : f.level ? 17 : 24" /></span>
                      {{ f.name }}
                      <span v-if="f.count" class="count">{{ f.count }}</span>
                    </a>
                  </li>
                </ul>
                <div class="scrollbar"><Icon name="caretup" :s="5" :w="9" class="dimarrow" /><span class="thumb tall"></span><Icon name="caret" :s="5" :w="9" /></div>
              </div>
              <div class="foot"><button aria-label="Kaustade tegevused"><Icon name="gear" :s="27" /><Icon name="caret" :s="5" :w="9" /></button></div>
            </section>

            <div class="splitter"></div>

            <section class="box list">
              <div class="listhead">
                <button class="opts" aria-label="Loendi valikud"><Icon name="gear" :s="17" /><Icon name="caret" :s="5" :w="9" /></button>
                <span class="countinfo">Kirjed 1 kuni 500, kokku 84383</span>
                <div class="pager">
                  <button aria-label="Esimene"><Icon name="first" :s="12" /></button>
                  <button aria-label="Eelmine"><Icon name="prev" :s="12" /></button>
                  <input type="text" value="1" aria-label="Lehekülg" />
                  <button aria-label="Järgmine"><Icon name="next" :s="12" /></button>
                  <button aria-label="Viimane"><Icon name="last" :s="12" /></button>
                </div>
              </div>
              <div class="scrollarea">
                <ul>
                  <li v-for="(m, i) in messages" :key="i" :class="{ unread: m.unread, selected: i === selected }" @click="selected = i">
                    <div class="line1"><span class="from">{{ m.from }}</span><span class="date">{{ m.date }}</span><span class="mark"><Icon v-if="i === selected" name="flag" :s="17" :w="16" /></span></div>
                    <div class="line2"><Icon :name="m.unread ? 'star' : 'bullet'" :s="18" /><span class="subject">{{ m.subject }}</span><span class="mark"><Icon name="attach" :s="18" :w="15" /></span></div>
                  </li>
                </ul>
                <div class="scrollbar"><Icon name="caretup" :s="5" :w="9" class="dimarrow" /><span class="thumb short"></span><Icon name="caret" :s="5" :w="9" /></div>
                <Icon name="cursor" :s="20" :w="14" class="cursor" />
              </div>
              <div class="listfoot">
                <button aria-label="Loend"><Icon name="list" :s="23" :w="31" /></button>
                <button aria-label="Lõimed"><Icon name="bubbles" :s="16" :w="20" /></button>
                <label class="pick first"><select aria-label="Vali"><option>Vali</option></select><span><Icon name="updown" :s="14" :w="10" /></span></label>
                <label class="pick"><select aria-label="Lõimed"><option>Lõimed</option></select><span><Icon name="updown" :s="14" :w="10" /></span></label>
              </div>
            </section>

            <div class="splitter"></div>

            <section class="box preview">
              <div class="scrollarea">
                <article>
                  <div class="mhead">
                    <button class="toggle" aria-label="Päised"><Icon name="caret" :s="8" :w="11" /></button>
                    <div class="photo"><Icon name="avatar" :s="40" /></div>
                    <div class="minfo">
                      <div class="mrow">
                        <h2>Undelivered Mail Returned to Sender</h2>
                        <div class="mbtns">
                          <button aria-label="Vasta"><Icon name="areply" :s="16" /></button>
                          <button aria-label="Vasta kõigile"><Icon name="areplyall" :s="16" :w="18" /></button>
                          <button aria-label="Edasta"><Icon name="aforward" :s="16" :w="18" /></button>
                          <button class="apart" aria-label="Ava uues aknas"><Icon name="popup" :s="15" :w="18" /></button>
                        </div>
                      </div>
                      <div class="mmeta">
                        <span>Saatja</span><b class="sender">MAILER-DAEMON@mail-out.elkdata.ee</b><Icon name="addcontact" :s="18" :w="22" />
                        <span class="when">Kuupäev</span><b>Täna 14:48</b>
                        <button class="moreh" aria-label="Rohkem"><Icon name="caret" :s="6" :w="10" /></button>
                      </div>
                    </div>
                  </div>
                  <div class="attachment"><Icon name="unknown" :s="30" :w="28" /><a href="#">Delivery report (~4 KiB)</a><Icon name="caret" :s="6" :w="10" /></div>
                  <pre>This is the mail system at host mail-out.elkdata.ee.

I'm sorry to have to inform you that your message could not
be delivered to one or more recipients. It's attached below.

For further assistance, please send mail to postmaster.

If you do so, please include this problem report. You can
delete your own text from the attached returned message.

                   The mail system

&lt;<a href="#">mihhail.stalnuhhin@eesti.ee</a>&gt;: host smtp.aso.ee[213.184.32.85] said: 550 5.1.1
    &lt;<a href="#">mihhail.stalnuhhin@eesti.ee</a>&gt;: Recipient address rejected: User unknown in
    virtual mailbox table (in reply to RCPT TO command)

&lt;<a href="#">mihkel.raud@eesti.ee</a>&gt;: host smtp.aso.ee[213.184.32.85] said: 550 5.1.1
    &lt;<a href="#">mihkel.raud@eesti.ee</a>&gt;: Recipient address rejected: User unknown in virtual
    mailbox table (in reply to RCPT TO command)</pre>
                </article>
                <div class="scrollbar"><Icon name="caretup" :s="5" :w="9" class="dimarrow" /><span class="thumb mid"></span><Icon name="caret" :s="5" :w="9" /></div>
              </div>
            </section>
          </main>
        </div>
      </div>
    </div>

    <footer class="panel-bottom">
      <button class="handle" aria-label="Hide panel"><Icon name="chevL" :s="12" :w="8" /></button>
      <button class="showdesk" aria-label="Show desktop"><Icon name="desk" :s="20" :w="22" /></button>
      <div class="tasks">
        <button v-for="t in tasks" :key="t.text" :class="{ active: t.active }"><Icon :name="t.icon" :s="18" /><span>{{ t.text }}</span></button>
      </div>
      <div class="spaces"><span class="on"><Icon name="operagrey" :s="17" /></span><span></span><span></span><span></span></div>
      <Icon name="bin" :s="24" :w="20" />
      <button class="handle" aria-label="Hide panel"><Icon name="chevR" :s="12" :w="8" /></button>
    </footer>
  </div>
</template>

<style>
body {
  margin: 0;
  overflow: hidden;
}
</style>

<style scoped>
* {
  box-sizing: border-box;
}

.desktop {
  display: flex;
  flex-direction: column;
  height: 100vh;
  background: #d0dae3;
  font-family: "Liberation Sans", Arial, sans-serif;
  font-size: 14px;
}

button {
  padding: 0;
  border: 0;
  background: none;
  color: inherit;
  font: inherit;
  display: flex;
  align-items: center;
  justify-content: center;
}

a {
  color: inherit;
  text-decoration: none;
}

ul {
  margin: 0;
  padding: 0;
  list-style: none;
}

svg {
  display: block;
  flex: none;
}

/* desktop panels */
.panel-top {
  display: grid;
  grid-template-columns: 198px 90px 69px 42px 42px 240px 345px 235px 1fr;
  height: 29px;
  flex: none;
  background: #123c0b;
  color: #fff;
  font: 18px/29px "Noto Sans", sans-serif;
  white-space: nowrap;
}

.pt-group {
  display: flex;
  align-items: center;
  gap: 5px;
}

.pt-cpu {
  gap: 3px;
}

.pt-menus {
  gap: 15px;
}

.pt-menus svg {
  margin-right: -9px;
}

.pt-net {
  gap: 0;
}

.pt-net svg:nth-child(2) {
  margin: 0 4px;
}

.pt-tray {
  justify-content: space-between;
}

.pt-end {
  display: flex;
  align-items: center;
  gap: 14px;
}

.menu {
  margin-right: 3px;
}

.handle {
  width: 19px;
  height: 28px;
  flex: none;
  border-radius: 6px;
  background: #333;
  color: #ddd;
}

.panel-bottom {
  display: flex;
  align-items: center;
  height: 28px;
  flex: none;
  background: #0f5c2b;
  color: #f2f2f2;
  font: 18px/28px "Noto Sans", sans-serif;
}

.showdesk {
  margin: 0 12px 0 2px;
}

.tasks {
  display: grid;
  grid-template-columns: repeat(7, minmax(0, 1fr));
  flex: 1;
  height: 28px;
}

.tasks button {
  justify-content: flex-start;
  gap: 6px;
  padding-left: 4px;
  white-space: nowrap;
  overflow: hidden;
}

.tasks .active {
  background: #2c2c2c;
  border: 1px solid #161616;
}

.spaces {
  display: flex;
  height: 28px;
  margin-right: 2px;
}

.spaces span {
  display: flex;
  align-items: center;
  justify-content: center;
  width: 50px;
  background: #07401f;
  border-right: 1px solid #0f5c2b;
}

.spaces .on {
  background: #6fa4a5;
  border: 1px solid #eee;
}

/* browser chrome */
.browser {
  display: flex;
  gap: 5px;
  flex: 1;
  min-height: 0;
  padding: 5px 5px 4px;
}

.sidebar {
  display: flex;
  flex-direction: column;
  align-items: center;
  width: 60px;
  flex: none;
  padding-top: 10px;
  border-radius: 10px;
  background: #fff;
  color: #3b464f;
}

.side-btn {
  width: 40px;
  height: 40px;
  border-radius: 10px;
}

.side-btn.tall {
  margin-bottom: 10px;
}

.side-btn.opera {
  color: #000;
}

.side-btn.book {
  background: #4b1fff;
  color: #fff;
}

.side-btn.gpt,
.side-btn.twcircle {
  background: #d5dfe6;
}

.sidebar hr {
  width: 40px;
  margin: 9px 0 13px;
  border: 0;
  border-top: 1px solid #a9b3bc;
}

.window {
  display: flex;
  flex-direction: column;
  flex: 1;
  min-width: 0;
}

.tabstrip {
  display: flex;
  align-items: center;
  gap: 5px;
  height: 45px;
  margin-bottom: 5px;
  padding-left: 4px;
}

.tabs {
  display: flex;
  align-items: center;
  height: 45px;
  flex: none;
}

.tabs.single {
  width: 44px;
  justify-content: center;
  border-radius: 10px;
  background: #e7edf2;
}

.tabs.island {
  padding: 0 2px 0 8px;
  border-radius: 10px;
  background: #e7edf2;
}

.tabs.long {
  width: 172px;
}

.island-bar {
  width: 7px;
  height: 35px;
  margin-right: 3px;
  flex: none;
  border-radius: 3px;
}

.tab {
  display: flex;
  align-items: center;
  justify-content: center;
  width: 20px;
  height: 23px;
  flex: none;
}

.tight .tab {
  width: 19px;
}

.tab + .tab {
  box-shadow: -1px 0 #8d969d;
}

.tab-active {
  display: flex;
  align-items: center;
  gap: 7px;
  width: 44px;
  height: 35px;
  padding-left: 5px;
  border-radius: 6px;
  background: #fff;
  box-shadow: 0 2px 6px #0005;
  overflow: hidden;
}

.tab-title {
  color: #555;
}

.winctl {
  display: flex;
  gap: 30px;
  margin-left: auto;
  padding-right: 10px;
  color: #222c35;
}

.addressbar {
  display: flex;
  gap: 2px;
  height: 49px;
  margin-bottom: 4px;
  color: #222c35;
}

.address {
  display: flex;
  align-items: center;
  flex: 1;
  padding: 0 3px 2px 11px;
  border-radius: 10px;
  background: #fff;
}

.navbtns {
  display: flex;
  gap: 24px;
  margin: 0 28px 0 0;
}

.dim {
  color: #b6bdc3;
}

.vpn {
  width: 38px;
  height: 20px;
  margin-right: 9px;
  border-radius: 3px;
  background: #4b1fff;
  color: #fff;
  font: 700 13px "Noto Sans", sans-serif;
}

.url {
  flex: 1;
  margin-left: 15px;
  color: #74828f;
  font: 19px "Noto Sans", sans-serif;
}

.url b {
  color: #1b242c;
  font-weight: 400;
}

.prompts {
  height: 24px;
  margin-right: 11px;
  padding: 0 7px;
  border: 2px solid #3b464f;
  border-radius: 12px;
  font: 700 11px "Noto Sans", sans-serif;
}

.actions {
  display: flex;
  gap: 16px;
  margin-right: 21px;
}

.actions button {
  width: 17px;
}

.profile {
  width: 30px;
  height: 30px;
  margin-right: 5px;
  border-radius: 6px;
  background: #e7edf2;
}

.wide {
  width: 41px;
}

.extensions {
  display: flex;
  align-items: center;
  gap: 10px;
  padding: 0 7px 2px;
  border-radius: 10px;
  background: #fff;
}

.extensions button {
  width: 20px;
}

.purple {
  width: 7px;
  height: 30px;
  border-radius: 3px;
  background: #4b1fff;
}

/* webmail */
.page {
  display: flex;
  flex-direction: column;
  flex: 1;
  min-height: 0;
  border-radius: 10px;
  background: #c9d1d9;
  overflow: hidden;
}

.topline {
  display: flex;
  align-items: center;
  gap: 13px;
  height: 29px;
  padding: 0 12px 4px;
  border-bottom: 1px solid #3b3b3b;
  background: #333;
  color: #a5a5a5;
}

.user {
  margin-left: auto;
}

.logout {
  display: flex;
  align-items: center;
  gap: 7px;
  margin-left: 6px;
  color: #fff;
}

.masthead {
  display: flex;
  height: 57px;
  background: #1c1c1c;
}

.logo {
  display: flex;
  align-items: center;
  gap: 12px;
  padding: 0 0 9px 22px;
  color: #eee;
  font: 24px "Liberation Sans Narrow", Roboto, sans-serif;
}

.taskbar-nav {
  display: flex;
  margin-left: auto;
  color: #eee;
  font-size: 15px;
}

.taskbar-nav a {
  display: flex;
  align-items: center;
  gap: 10px;
  padding: 0 12px 0 15px;
}

.taskbar-nav .current {
  background: #2c2c2c;
  color: #21a4fb;
}

.collapse {
  width: 24px;
  height: 40px;
  margin-top: 8px;
  border-left: 1px solid #3a3a3a;
  color: #888;
}

.toolbar {
  display: flex;
  align-items: flex-start;
  height: 77px;
  padding: 20px 13px 0 11px;
  color: #666e72;
}

.tool {
  flex-direction: column;
  gap: 1px;
  width: 76px;
  font-size: 13px;
  line-height: 16px;
  white-space: nowrap;
}

.tool.start {
  margin-left: 34px;
}

.tool.left svg {
  margin-right: 22px;
}

.split {
  position: relative;
  margin: 0 4px;
}

.split.plain {
  margin: 0;
}

.drop {
  position: absolute;
  top: 0;
  right: 0;
  width: 18px;
  height: 32px;
  padding-top: 18px;
  border-left: 1px solid #b4bbc2;
}

.plain .drop {
  right: 10px;
  border: 0;
}

.filter {
  width: 144px;
  height: 32px;
  margin: 7px 18px 0 auto;
  border: 1px solid #767676;
  border-radius: 0;
  background: #fff;
  font: 14px "Liberation Sans", sans-serif;
}

.searchbox {
  display: flex;
  align-items: center;
  gap: 2px;
  width: 302px;
  height: 32px;
  margin-top: 7px;
  padding: 0 7px;
  border: 1px solid #a9aeb3;
  border-radius: 5px;
  background: #f0f0f0;
}

.searchbox input {
  flex: 1;
  min-width: 0;
  border: 0;
  padding: 0 5px;
  background: none;
  font: 700 14px "Liberation Sans", sans-serif;
}

.searchbox input::placeholder {
  color: #888;
}

.columns {
  display: flex;
  flex: 1;
  min-height: 0;
  padding: 0 12px 24px 14px;
}

.box {
  display: flex;
  flex-direction: column;
  border: 1px solid #a9b3be;
  border-radius: 5px;
  overflow: hidden;
}

.scrollarea {
  position: relative;
  display: flex;
  flex: 1;
  min-height: 0;
  overflow: hidden;
}

.scrollarea > ul,
.scrollarea > article {
  flex: 1;
  min-width: 0;
}

.scrollbar {
  display: flex;
  flex-direction: column;
  align-items: center;
  justify-content: space-between;
  width: 18px;
  padding: 8px 0 6px;
  flex: none;
  background: #f0f0f0;
  color: #444;
}

.dimarrow {
  color: #a2a2a2;
}

.thumb {
  width: 14px;
  margin: 5px 0 auto;
  background: #c1c1c1;
}

.thumb.tall {
  height: 183px;
}

.thumb.short {
  height: 37px;
}

.thumb.mid {
  height: 59px;
}

.splitter {
  align-self: center;
  width: 7px;
  height: 24px;
  margin: 0 4px;
  border: solid #9aa3ac;
  border-width: 0 2px;
}

.folders {
  width: 250px;
  flex: none;
  background: #d9ecf4;
}

.folders ul {
  display: flex;
  flex-direction: column;
  padding-bottom: 3px;
}

.folders li {
  flex: 1;
  border-bottom: 1px solid #b5d0d9;
  color: #456e7b;
}

.folders a {
  display: flex;
  align-items: center;
  height: 100%;
  padding-right: 8px;
}

.folders .unread {
  color: #36626f;
  font-weight: 700;
}

.folders .current {
  background: #c7e3ef;
  color: #064d5f;
}

.ficon {
  width: 35px;
  color: #6b929e;
}

.current .ficon {
  color: #064d5f;
}

.l0 a {
  padding-left: 9px;
}

.l1 a {
  padding-left: 34px;
}

.l1 .ficon,
.l2 .ficon {
  width: 30px;
}

.l2 a {
  padding-left: 54px;
}

.count {
  min-width: 35px;
  height: 24px;
  margin: 0 0 2px auto;
  padding: 0 5px;
  border-radius: 12px;
  background: #6a929f;
  color: #fff;
  line-height: 23px;
  text-align: center;
}

.current .count {
  background: #005d76;
}

.foot {
  height: 53px;
  border-top: 1px solid #b5d0d9;
}

.foot button {
  gap: 6px;
  width: 61px;
  height: 52px;
  border-right: 1px solid #fff;
  background: #c7e3ef;
  color: #6b929e;
}

.list {
  width: 512px;
  flex: none;
  background: #fff;
}

.listhead {
  display: flex;
  align-items: center;
  height: 42px;
  flex: none;
  padding: 0 13px 4px 9px;
  border-bottom: 1px solid #d5d5d5;
  background: #eee;
  color: #444;
  font-size: 14px;
}

.opts {
  gap: 2px;
  margin-right: 18px;
  color: #666e72;
}

.countinfo {
  padding-top: 4px;
}

.pager {
  display: flex;
  align-items: center;
  gap: 16px;
  margin-left: auto;
}

.pager input {
  width: 25px;
  height: 24px;
  margin: 0 -3px;
  padding: 0;
  border: 1px solid #aaa;
  border-radius: 4px;
  text-align: center;
  font: 14px "Liberation Sans", sans-serif;
}

.list li {
  height: 59px;
  padding: 6px 6px 0 7px;
  border-bottom: 1px solid #d5d5d5;
  color: #333;
}

.list .selected {
  padding-left: 5px;
  border-left: 2px solid #35a5d0;
  background: #017cb8;
  color: #fff;
}

.list .unread .subject,
.list .unread .line1 {
  font-weight: 700;
}

.line1,
.line2 {
  display: flex;
  align-items: center;
}

.line1 {
  height: 20px;
  padding-left: 24px;
  color: #6b6b6b;
}

.line2 {
  height: 30px;
  gap: 5px;
  font-size: 15px;
}

.selected .line1 {
  color: #fff;
}

.from,
.subject {
  flex: 1;
}

.mark {
  width: 29px;
  padding-left: 13px;
}

.cursor {
  position: absolute;
  top: 71px;
  left: 334px;
}

.listfoot {
  display: flex;
  align-items: center;
  height: 38px;
  flex: none;
  gap: 11px;
  padding: 0 7px 2px;
  border-top: 1px solid #d5d5d5;
  background: #eaeaea;
}

.pick {
  display: flex;
  height: 27px;
  border: 1px solid #aaa;
  border-radius: 5px;
  background: #f2f2f2;
  overflow: hidden;
}

.pick.first {
  margin-left: 26px;
}

.pick select {
  appearance: none;
  padding: 0 11px 0 8px;
  border: 0;
  background: none;
  color: #333;
  font: 14px "Liberation Sans", sans-serif;
}

.pick span {
  display: flex;
  align-items: center;
  justify-content: center;
  width: 28px;
  border-left: 1px solid #aaa;
  background: #cdcdcd;
}

.preview {
  flex: 1;
  min-width: 0;
  background: #fff;
}

.mhead {
  display: flex;
  height: 69px;
  border-bottom: 1px solid #dadada;
  background: #f9f9f9;
}

.toggle {
  align-items: flex-start;
  width: 24px;
  padding-top: 15px;
  background: #ebebeb;
  color: #444;
}

.photo {
  width: 42px;
  height: 42px;
  margin: 13px 10px 0 14px;
  border: 1px solid #e2e2e2;
  border-radius: 3px;
  background: #fff;
}

.minfo {
  flex: 1;
  padding: 9px 13px 0 0;
}

.mrow {
  display: flex;
  justify-content: space-between;
}

h2 {
  margin: 0;
  color: #333;
  font-size: 18px;
  line-height: 22px;
}

.mbtns {
  display: flex;
  gap: 9px;
}

.mbtns button {
  width: 34px;
  height: 26px;
  border: 1px solid #c4c4c4;
  border-radius: 4px;
  background: #e4e4e4;
  color: #666e72;
}

.mbtns .apart {
  margin-left: 8px;
}

.mmeta {
  display: flex;
  align-items: center;
  margin-top: 2px;
  padding-left: 2px;
  color: #666;
}

.sender {
  margin: 0 7px 0 20px;
}

.when {
  margin: 0 20px 0 24px;
}

.moreh {
  width: 16px;
  margin-left: auto;
}

.attachment {
  display: flex;
  align-items: center;
  gap: 8px;
  height: 47px;
  padding-left: 7px;
  border-bottom: 1px solid #dadada;
  background: #f9f9f9;
  color: #666e72;
}

.attachment a {
  color: #333;
  font-weight: 700;
}

pre {
  margin: 0;
  padding: 11px 12px 0;
  color: #333;
  font: 15px/18px "DejaVu Sans Mono", monospace;
  white-space: pre-wrap;
}

pre a {
  color: #0069a6;
  text-decoration: underline;
}
</style>
